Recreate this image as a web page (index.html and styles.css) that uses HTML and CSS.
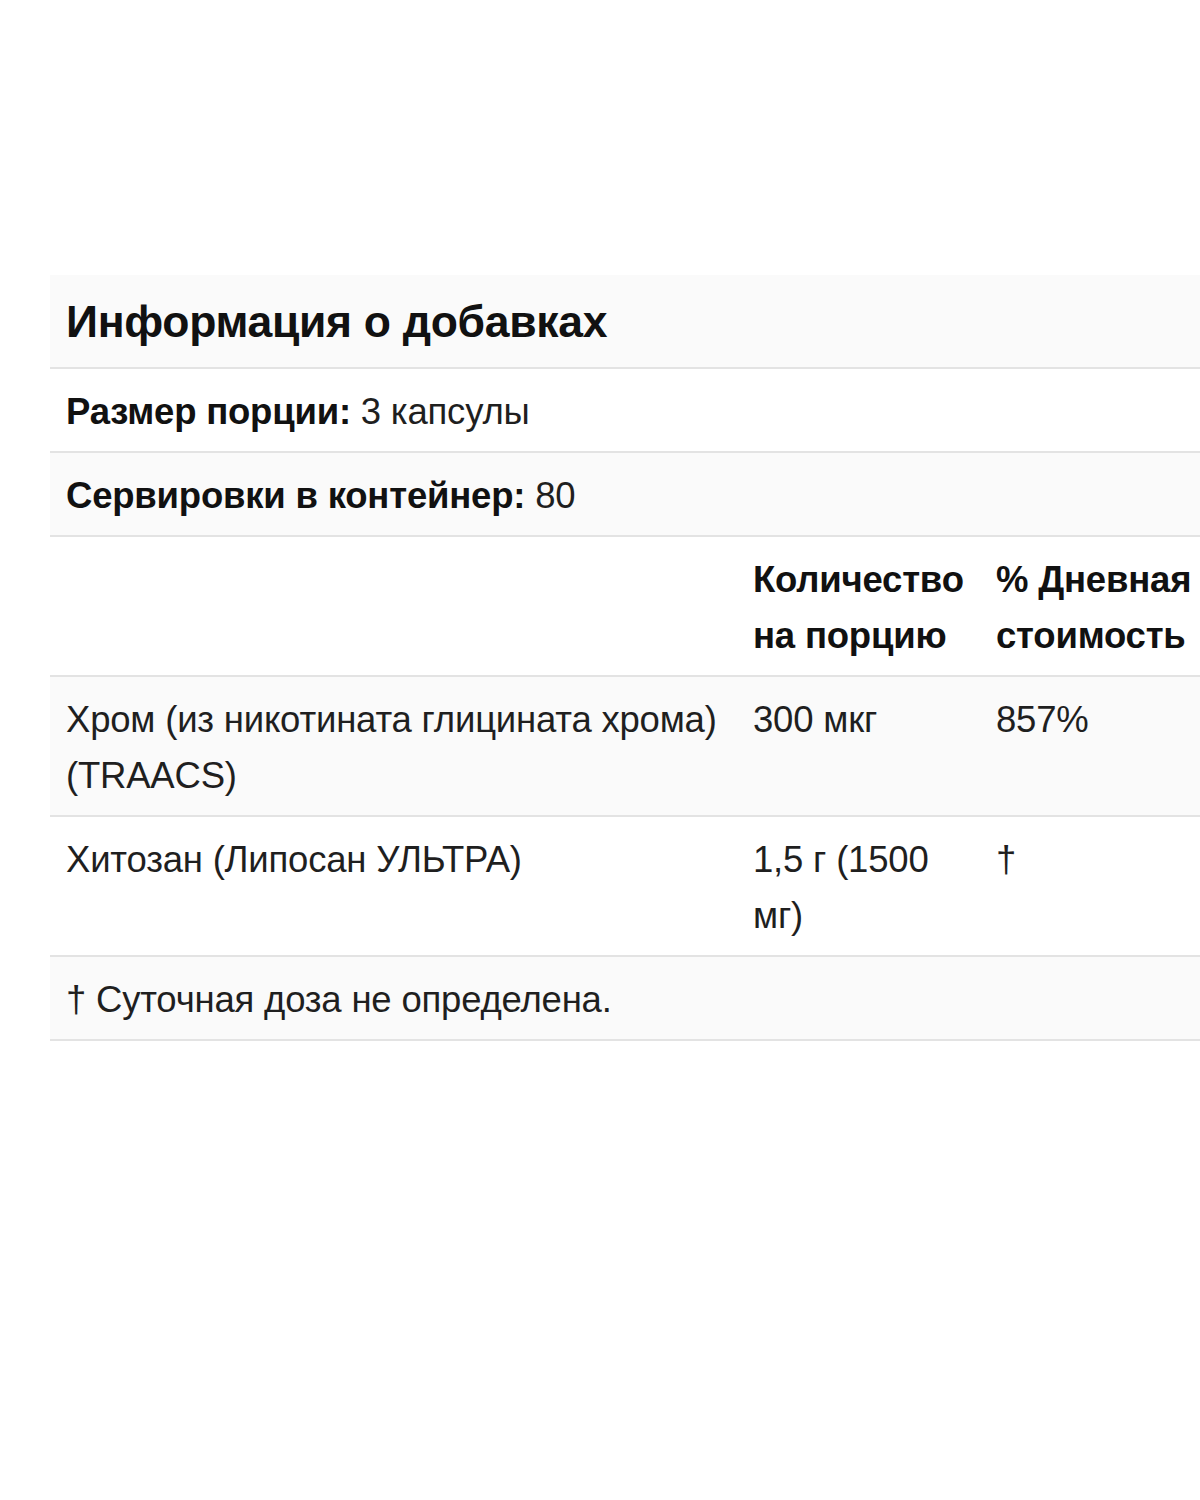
FILE: index.html
```html
<!DOCTYPE html>
<html lang="ru">
<head>
<meta charset="utf-8">
<link rel="stylesheet" href="styles.css">
</head>
<body>
<div class="wrap">
  <table class="facts">
    <colgroup>
      <col class="c1"><col class="c2"><col class="c3">
    </colgroup>
    <tr class="alt">
      <th colspan="3" class="title">Информация о добавках</th>
    </tr>
    <tr>
      <td colspan="3"><b>Размер порции:</b> 3 капсулы</td>
    </tr>
    <tr class="alt">
      <td colspan="3"><b>Сервировки в контейнер:</b> 80</td>
    </tr>
    <tr>
      <td></td>
      <td><b>Количество на порцию</b></td>
      <td><b>% Дневная стоимость</b></td>
    </tr>
    <tr class="alt">
      <td>Хром (из никотината глицината хрома) (TRAACS)</td>
      <td>300 мкг</td>
      <td>857%</td>
    </tr>
    <tr>
      <td>Хитозан (Липосан УЛЬТРА)</td>
      <td>1,5 г (1500 мг)</td>
      <td>†</td>
    </tr>
    <tr class="alt">
      <td colspan="3">† Суточная доза не определена.</td>
    </tr>
  </table>
</div>
</body>
</html>
```
FILE: styles.css
```css
html, body {
  margin: 0;
  padding: 0;
  background: #ffffff;
  overflow: hidden;
}
body {
  font-family: "Liberation Sans", Arial, sans-serif;
  color: #1f1f1f;
}
.wrap {
  padding-top: 275px;
  padding-left: 50px;
  width: 1200px;
}
.facts {
  border-collapse: collapse;
  width: 1180px;
  table-layout: fixed;
  font-size: 36.5px;
  line-height: 56px;
  letter-spacing: -0.2px;
}
.c1 { width: 687px; }
.c2 { width: 243px; }
.facts tr { border-bottom: 2px solid #e3e3e3; }
.facts tr.alt { background: #fafafa; }
.facts td, .facts th {
  padding: 15px 4px 11px 16px;
  vertical-align: top;
  text-align: left;
}
.facts th.title {
  font-size: 44.5px;
  line-height: 66px;
  font-weight: bold;
  letter-spacing: -0.3px;
  padding: 14px 16px 12px;
  color: #111;
}
.facts b { font-weight: bold; color: #111; }
```
